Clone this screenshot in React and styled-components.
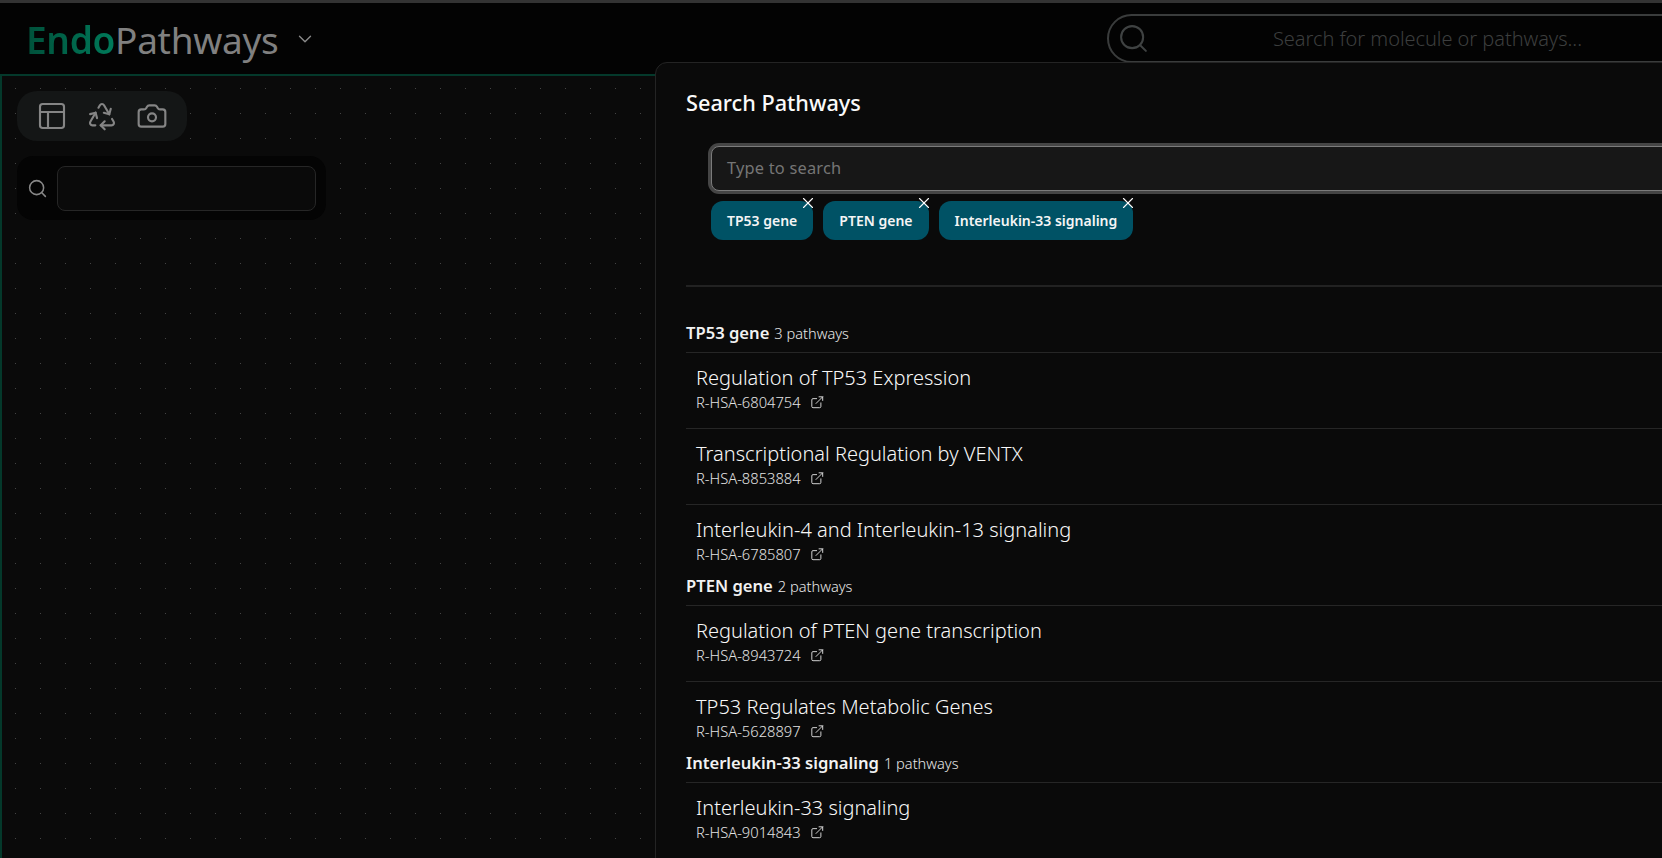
import React from 'react';
import styled, { createGlobalStyle } from 'styled-components';
import { ChevronDown, Search, PanelsTopLeft, Recycle, Camera, X, ExternalLink } from 'lucide-react';

const GlobalStyle = createGlobalStyle`
  html, body {
    margin: 0;
    height: 100%;
    background: #000;
    overflow: hidden;
  }
  * {
    box-sizing: border-box;
  }
`;

const Page = styled.div`
  position: relative;
  width: 100vw;
  height: 100vh;
  overflow: hidden;
  background: #030303;
  border-top: 3px solid #333;
  font-family: "Noto Sans", "Open Sans", sans-serif;
  color: #fff;
  display: flex;
  flex-direction: column;
`;

const Header = styled.header`
  height: 71px;
  flex-shrink: 0;
  display: flex;
  align-items: flex-start;
  padding-left: 26px;
`;

const Logo = styled.div`
  font-size: 37px;
  line-height: 48px;
  margin-top: 13px;
  letter-spacing: -0.3px;
  color: #808080;
`;

const LogoAccent = styled.span`
  font-weight: 600;
  background: linear-gradient(90deg, #00503a, #007a5a);
  -webkit-background-clip: text;
  background-clip: text;
  color: transparent;
`;

const LogoMenu = styled.div`
  margin: 25px 0 0 16px;
  color: #8a8a8a;
  display: flex;
`;

const HeaderSearch = styled.div`
  margin-left: auto;
  margin-top: 11px;
  margin-right: -60px;
  width: 615px;
  height: 49px;
  border: 2px solid #3a3c3c;
  border-radius: 26px;
  display: flex;
  align-items: center;
  padding-left: 8px;
  color: #3f4242;
`;

const HeaderSearchText = styled.span`
  margin-left: 123px;
  font-size: 20px;
  letter-spacing: -0.05px;
  font-weight: 300;
  color: #3c3e3e;
`;

const Canvas = styled.main`
  flex: 1;
  border-top: 2px solid #04392b;
  border-left: 2px solid #04392b;
  background-color: #0a0a0a;
  background-image: radial-gradient(circle, #444 0.8px, transparent 1px);
  background-size: 25px 25px;
  background-position: 1px 0px;
  padding: 15px;
  display: flex;
  flex-direction: column;
  align-items: flex-start;
  gap: 15px;
`;

const Toolbar = styled.div`
  width: 170px;
  height: 50px;
  border-radius: 20px;
  background: #141616;
  display: flex;
  align-items: center;
  justify-content: center;
  gap: 18px;
  color: #858585;
`;

const NodeSearch = styled.div`
  width: 309px;
  height: 64px;
  border-radius: 16px;
  background: #040404;
  display: flex;
  align-items: center;
  padding: 0 10px;
  gap: 9px;
  color: #888;
`;

const NodeSearchInput = styled.div`
  flex: 1;
  height: 45px;
  border-radius: 8px;
  border: 1px solid #262626;
  background: #0a0a0a;
`;

const Sheet = styled.aside`
  position: absolute;
  left: 655px;
  top: 59px;
  width: 1100px;
  height: 900px;
  background: #0a0a0a;
  border: 1px solid #242424;
  border-radius: 12px;
  padding: 24px 30px;
`;

const SheetTitle = styled.h2`
  margin: 0;
  font-size: 21.7px;
  line-height: 32px;
  font-weight: 500;
  color: #fafafa;
`;

const SearchArea = styled.div`
  margin: 27px 0 0 25px;
`;

const SearchInput = styled.div`
  height: 45px;
  border: 1px solid #7b7b7b;
  border-radius: 8px;
  background: #171717;
  box-shadow: 0 0 0 3px #454545;
  display: flex;
  align-items: center;
  padding: 0 0 2px 15px;
  font-size: 16.4px;
  letter-spacing: 0.2px;
  color: #757575;
`;

const Chips = styled.div`
  display: flex;
  gap: 10px;
  margin-top: 10px;
`;

const Chip = styled.div`
  position: relative;
  height: 39px;
  padding: 0 16px;
  border-radius: 12px;
  background: #005265;
  display: flex;
  align-items: center;
  font-size: 14px;
  font-weight: 600;
  color: #f5f5f5;
`;

const ChipClose = styled.span`
  position: absolute;
  top: -7px;
  right: -4px;
  display: flex;
  color: #fff;
`;

const Divider = styled.hr`
  margin: 45px 0 0;
  border: 0;
  border-top: 2px solid #222;
`;

const Results = styled.div`
  margin-top: 30px;
`;

const GroupHeader = styled.div`
  height: 36px;
  display: flex;
  align-items: center;
  gap: 5px;
  padding-bottom: 4px;
  border-bottom: 1px solid #262626;
`;

const GroupName = styled.span`
  font-size: 16.6px;
  font-weight: 600;
  color: #f2f2f2;
`;

const GroupCount = styled.span`
  font-size: 14.6px;
  font-weight: 300;
  color: #e8e8e8;
`;

const Row = styled.div`
  height: ${(p) => (p.$last ? '65px' : '76px')};
  padding: 12px 10px 0;
  border-bottom: ${(p) => (p.$last ? 'none' : '1px solid #262626')};
`;

const RowTitle = styled.div`
  font-size: 20px;
  line-height: 26px;
  font-weight: 300;
  color: #f8f8f8;
`;

const RowId = styled.div`
  margin-top: 2px;
  display: flex;
  align-items: center;
  gap: 9px;
  font-size: 14.7px;
  line-height: 18px;
  font-weight: 300;
  color: #e4e4e4;
`;

const groups = [
  {
    name: 'TP53 gene',
    rows: [
      { title: 'Regulation of TP53 Expression', id: 'R-HSA-6804754' },
      { title: 'Transcriptional Regulation by VENTX', id: 'R-HSA-8853884' },
      { title: 'Interleukin-4 and Interleukin-13 signaling', id: 'R-HSA-6785807' },
    ],
  },
  {
    name: 'PTEN gene',
    rows: [
      { title: 'Regulation of PTEN gene transcription', id: 'R-HSA-8943724' },
      { title: 'TP53 Regulates Metabolic Genes', id: 'R-HSA-5628897' },
    ],
  },
  {
    name: 'Interleukin-33 signaling',
    rows: [{ title: 'Interleukin-33 signaling', id: 'R-HSA-9014843' }],
  },
];

const App = () => {
  return (
    <Page>
      <GlobalStyle />
      <Header>
        <Logo>
          <LogoAccent>Endo</LogoAccent>Pathways
        </Logo>
        <LogoMenu>
          <ChevronDown size={22} strokeWidth={1.5} />
        </LogoMenu>
        <HeaderSearch>
          <Search size={33} strokeWidth={1.5} />
          <HeaderSearchText>Search for molecule or pathways...</HeaderSearchText>
        </HeaderSearch>
      </Header>
      <Canvas>
        <Toolbar>
          <PanelsTopLeft size={32} strokeWidth={1.6} />
          <Recycle size={32} strokeWidth={1.6} />
          <Camera size={32} strokeWidth={1.6} />
        </Toolbar>
        <NodeSearch>
          <Search size={21} strokeWidth={1.75} />
          <NodeSearchInput />
        </NodeSearch>
      </Canvas>
      <Sheet>
        <SheetTitle>Search Pathways</SheetTitle>
        <SearchArea>
          <SearchInput>Type to search</SearchInput>
          <Chips>
            {groups.map((group) => (
              <Chip key={group.name}>
                {group.name}
                <ChipClose>
                  <X size={18} strokeWidth={1.5} />
                </ChipClose>
              </Chip>
            ))}
          </Chips>
        </SearchArea>
        <Divider />
        <Results>
          {groups.map((group) => (
            <section key={group.name}>
              <GroupHeader>
                <GroupName>{group.name}</GroupName>
                <GroupCount>{group.rows.length} pathways</GroupCount>
              </GroupHeader>
              {group.rows.map((row, index) => (
                <Row key={row.id} $last={index === group.rows.length - 1}>
                  <RowTitle>{row.title}</RowTitle>
                  <RowId>
                    {row.id}
                    <ExternalLink size={14.5} strokeWidth={1.5} />
                  </RowId>
                </Row>
              ))}
            </section>
          ))}
        </Results>
      </Sheet>
    </Page>
  );
};

export default App;
